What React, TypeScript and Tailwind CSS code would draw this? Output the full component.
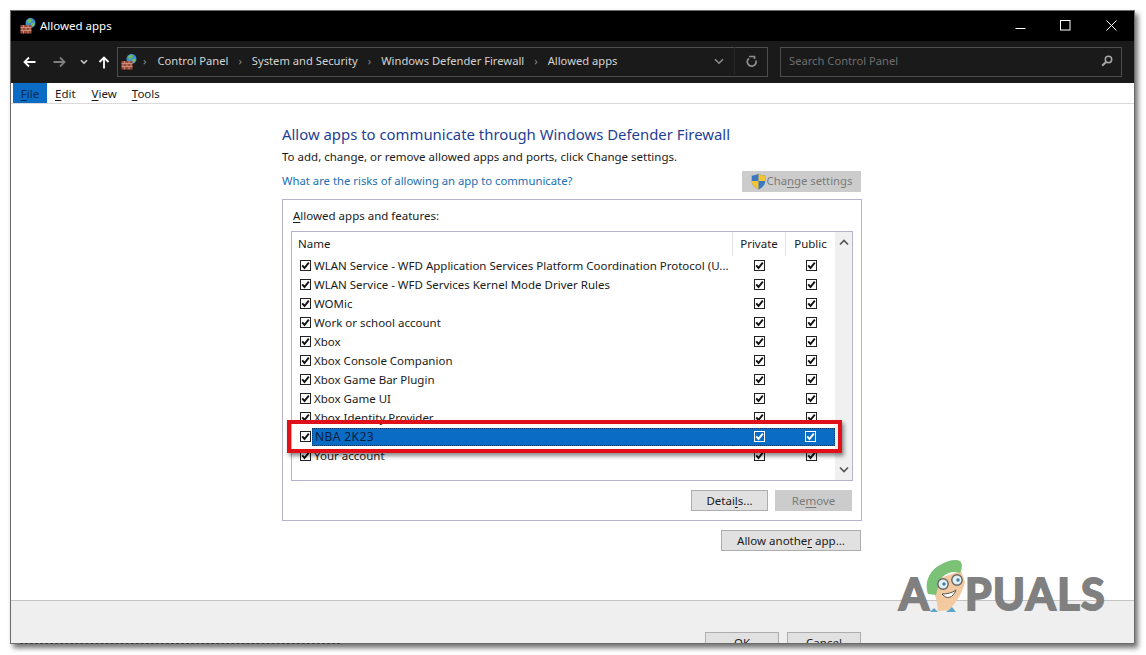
const font = { fontFamily: '"Noto Sans", "Open Sans", sans-serif' };

function FirewallIcon() {
  return (
    <svg width="16" height="17" viewBox="0 0 16 17" className="shrink-0">
      <circle cx="10.5" cy="6" r="5" fill="#3f8fd6" />
      <path d="M7 3.5 L10 1.5 L12 3 L10.5 5.5 L8 6Z" fill="#6fbf4a" />
      <path d="M11 6.5 L14.5 5.5 L14.5 8 L12 10Z" fill="#79c257" />
      <rect x="0.5" y="8" width="11" height="8.5" fill="#9c4a38" />
      <path d="M0.5 10.5H11.5M0.5 13.5H11.5M3.5 8V10.5M8 8V10.5M2 10.5V13.5M6 10.5V13.5M10 10.5V13.5M3.5 13.5V16.5M8 13.5V16.5" stroke="#d9a48e" strokeWidth="0.7" fill="none" />
    </svg>
  );
}

function Shield() {
  return (
    <svg width="15" height="17" viewBox="0 0 15 17" className="shrink-0">
      <path d="M7.5 0.5 C5.5 2 3 2.6 0.7 2.6 V8 C0.7 12 4 15 7.5 16.5 C11 15 14.3 12 14.3 8 V2.6 C12 2.6 9.5 2 7.5 0.5Z" fill="#3a78c2" />
      <path d="M7.5 0.5 C9.5 2 12 2.6 14.3 2.6 V8 H7.5Z" fill="#f3c434" />
      <path d="M7.5 8 H0.7 C0.7 12 4 15 7.5 16.5Z" fill="#f3c434" />
    </svg>
  );
}

function Check({ selected }: { selected?: boolean }) {
  return (
    <span
      className={
        selected
          ? "flex h-[11px] w-[11px] items-center justify-center border border-white bg-[#0a6cc4]"
          : "flex h-[11px] w-[11px] items-center justify-center border border-[#222222] bg-white"
      }
    >
      <svg width="9" height="9" viewBox="0 0 9 9">
        <path d="M1.2 4.4 L3.5 7 L7.8 1.6" fill="none" stroke={selected ? "#ffffff" : "#111111"} strokeWidth="1.9" />
      </svg>
    </span>
  );
}

function U({ children }: { children: string }) {
  return <span className="underline underline-offset-2">{children}</span>;
}

const rows = [
  "WLAN Service - WFD Application Services Platform Coordination Protocol (U...",
  "WLAN Service - WFD Services Kernel Mode Driver Rules",
  "WOMic",
  "Work or school account",
  "Xbox",
  "Xbox Console Companion",
  "Xbox Game Bar Plugin",
  "Xbox Game UI",
  "Xbox Identity Provider",
  "NBA 2K23",
  "Your account",
];

function Row({ name }: { name: string }) {
  const selected = name === "NBA 2K23";
  return (
    <div className="relative flex h-[19px] items-center text-[11.5px] text-[#1a1a1a]">
      <div className="flex w-[441px] items-center pl-[8px]">
        <Check />
        <span
          className={
            selected
              ? "ml-[1px] flex h-[18px] flex-1 items-center whitespace-nowrap border border-r-0 border-dotted border-[#0b3d70] bg-[#0a6cc4] pl-[2px] text-[12px] tracking-[0.4px] text-[#06203f]"
              : "ml-[3px] whitespace-nowrap"
          }
        >
          {name}
        </span>
      </div>
      <div className={selected ? "flex h-[18px] w-[102px] items-center border-y border-r border-dotted border-[#0b3d70] bg-[#0a6cc4]" : "flex w-[102px] items-center"}>
        <div className="flex w-[53px] justify-center">
          <Check selected={selected} />
        </div>
        <div className="flex w-[49px] justify-center pl-[2px]">
          <Check selected={selected} />
        </div>
      </div>
    </div>
  );
}

function Btn({ w, disabled, children }: { w: string; disabled?: boolean; children: React.ReactNode }) {
  return (
    <div
      className={
        w +
        " flex h-[21px] items-center justify-center border text-[11.5px] " +
        (disabled ? "border-[#cccccc] bg-[#cccccc] text-[#7a7a7a]" : "border-[#adadad] bg-[#e1e1e1] text-[#1a1a1a]")
      }
    >
      <span>{children}</span>
    </div>
  );
}

const logoText = "absolute text-[43px] font-bold leading-[56px] text-[#808080] [-webkit-text-stroke:2px_#808080] [stroke-linejoin:round]";

export default function App() {
  return (
    <div className="relative h-[655px] w-[1146px] overflow-hidden bg-white" style={font}>
      <div className="absolute left-[10px] top-[10px] flex h-[634px] w-[1125px] flex-col overflow-hidden border border-[#6b6b6b] bg-white shadow-[3px_4px_5px_rgba(0,0,0,0.55)]">
        {/* title bar */}
        <div className="flex h-[30px] shrink-0 items-center bg-black pb-[1px] pl-[9px] text-[11.5px] text-white">
          <FirewallIcon />
          <span className="ml-[4px]">Allowed apps</span>
          <div className="ml-auto flex items-center">
            <svg width="11" height="11" viewBox="0 0 11 11" className="mr-[34px]">
              <path d="M0.5 8.5H10.5" stroke="#fff" />
            </svg>
            <svg width="11" height="11" viewBox="0 0 11 11" className="mr-[35px]">
              <rect x="0.5" y="0.5" width="9.5" height="9.5" fill="none" stroke="#fff" />
            </svg>
            <svg width="11" height="11" viewBox="0 0 11 11" className="mr-[17px]">
              <path d="M0.5 0.5L10.5 10.5M10.5 0.5L0.5 10.5" stroke="#fff" />
            </svg>
          </div>
        </div>
        {/* address bar */}
        <div className="flex h-[42px] shrink-0 items-center bg-[#1a1a1a] pl-[12px] text-[11.2px] leading-[16px]">
          <svg width="13" height="12" viewBox="0 0 13 12">
            <path d="M12.5 6H2M6 1.5L1.5 6L6 10.5" fill="none" stroke="#fff" strokeWidth="1.8" />
          </svg>
          <svg width="13" height="12" viewBox="0 0 13 12" className="ml-[17px]">
            <path d="M0.5 6H11M7 1.5L11.5 6L7 10.5" fill="none" stroke="#7f7f7f" strokeWidth="1.8" />
          </svg>
          <svg width="8" height="6" viewBox="0 0 8 6" className="ml-[14px]">
            <path d="M1 1.2L4 4.2L7 1.2" fill="none" stroke="#cfcfcf" strokeWidth="1.6" />
          </svg>
          <svg width="12" height="13" viewBox="0 0 12 13" className="ml-[10px]">
            <path d="M6 12.5V2M1.5 6L6 1.5L10.5 6" fill="none" stroke="#fff" strokeWidth="1.8" />
          </svg>
          <div className="ml-[7px] flex h-[30px] w-[651px] items-center border border-[#4d4d4d] pb-[2px] pl-[3px] text-[#d4d4d4]">
            <FirewallIcon />
            <span className="ml-[6px] text-[#8a8a8a]">›</span>
            <span className="ml-[11px]">Control Panel</span>
            <span className="ml-[10px] text-[#8a8a8a]">›</span>
            <span className="ml-[10px]">System and Security</span>
            <span className="ml-[10px] text-[#8a8a8a]">›</span>
            <span className="ml-[10px]">Windows Defender Firewall</span>
            <span className="ml-[10px] text-[#8a8a8a]">›</span>
            <span className="ml-[10px]">Allowed apps</span>
            <div className="ml-auto flex items-center">
              <svg width="10" height="7" viewBox="0 0 10 7" className="mr-[10px]">
                <path d="M1 1.2L5 5.2L9 1.2" fill="none" stroke="#8c8c8c" strokeWidth="1.6" />
              </svg>
              <div className="mr-[11px] h-[28px] w-px bg-[#262626]" />
              <svg width="12" height="13" viewBox="0 0 12 13" className="mr-[9px]">
                <path d="M3 1.5H8.5V4M9.8 5.5A4.3 4.3 0 1 1 3 3.4" fill="none" stroke="#8c8c8c" strokeWidth="1.7" />
              </svg>
            </div>
          </div>
          <div className="ml-[12px] flex h-[30px] w-[342px] items-center justify-between border border-[#4d4d4d] pb-[2px] pl-[8px] pr-[8px] text-[#6e6e6e]">
            <span>Search Control Panel</span>
            <svg width="12" height="12" viewBox="0 0 12 12">
              <circle cx="7.5" cy="4.5" r="3.2" fill="none" stroke="#a8a8a8" strokeWidth="1.5" />
              <path d="M5 7L1.2 10.8" stroke="#a8a8a8" strokeWidth="2" />
            </svg>
          </div>
        </div>
        {/* menu bar */}
        <div className="flex h-[21px] shrink-0 border-b border-[#d9d9d9] bg-white pl-[2px] text-[11.5px] leading-[22px] text-[#1a1a1a]">
          <span className="h-[20px] w-[34px] bg-[#0a6cc4] text-center text-[#0b2c52]">
            <U>F</U>ile
          </span>
          <span className="ml-[8px]"><U>E</U>dit</span>
          <span className="ml-[16px]"><U>V</U>iew</span>
          <span className="ml-[15px]"><U>T</U>ools</span>
        </div>
        {/* content */}
        <div className="flex-1 bg-white pl-[271px] pt-[19px]">
          <div className="text-[14.9px] leading-[22px] text-[#1f3f94]">Allow apps to communicate through Windows Defender Firewall</div>
          <div className="mt-[4px] text-[11.5px] leading-[16px] text-[#1a1a1a]">To add, change, or remove allowed apps and ports, click Change settings.</div>
          <div className="mt-[6px] flex h-[21px] w-[579px] items-center justify-between text-[11.3px] leading-[16px]">
            <span className="pb-[1px] text-[#1a6fb5]">What are the risks of allowing an app to communicate?</span>
            <div className="flex h-[21px] w-[119px] items-center justify-center bg-[#cccccc] pb-[1px] text-[#7a7a7a]">
              <Shield />
              <span className="ml-[1px]">Cha<U>n</U>ge settings</span>
            </div>
          </div>
          <div className="mt-[7px] h-[322px] w-[580px] border border-[#b4b4cf] pl-[8px] pt-[7px]">
            <div className="pl-[2px] text-[11.5px] leading-[17px] text-[#1a1a1a]"><U>A</U>llowed apps and features:</div>
            <div className="mt-[7px] flex h-[250px] w-[562px] border border-[#b4b4cf]">
              <div className="w-[543px]">
                <div className="flex h-[24px] items-center text-[11.5px] text-[#1a1a1a]">
                  <span className="w-[440px] pl-[6px]">Name</span>
                  <span className="flex h-full w-[53px] items-center justify-center border-l border-[#e3e3e3]">Private</span>
                  <span className="flex h-full w-[50px] items-center justify-center border-l border-[#e3e3e3]">Public</span>
                </div>
                {rows.map((r) => (
                  <Row key={r} name={r} />
                ))}
              </div>
              <div className="flex w-[18px] flex-col items-center justify-between bg-[#f0f0f0] py-[7px]">
                <svg width="10" height="7" viewBox="0 0 10 7">
                  <path d="M1 5.5L5 1.5L9 5.5" fill="none" stroke="#555" strokeWidth="1.7" />
                </svg>
                <svg width="10" height="7" viewBox="0 0 10 7">
                  <path d="M1 1.5L5 5.5L9 1.5" fill="none" stroke="#555" strokeWidth="1.7" />
                </svg>
              </div>
            </div>
            <div className="mt-[9px] flex w-[561px] justify-end gap-[7px]">
              <Btn w="w-[77px]">Detai<U>l</U>s...</Btn>
              <Btn w="w-[77px]" disabled>Re<U>m</U>ove</Btn>
            </div>
          </div>
          <div className="mt-[9px] flex w-[579px] justify-end">
            <Btn w="w-[140px]">Allow anothe<U>r</U> app...</Btn>
          </div>
        </div>
        {/* footer */}
        <div className="flex h-[43px] shrink-0 justify-end gap-[8px] overflow-hidden border-t border-[#c4c4c4] bg-[#efefef] pr-[273px] pt-[31px]">
          <Btn w="w-[74px] shrink-0">OK</Btn>
          <Btn w="w-[74px] shrink-0">Cancel</Btn>
        </div>
      </div>

      {/* clipped content below the window's lower edge */}
      <div className="absolute left-[20px] top-[643px] w-[320px] border-t border-dashed border-[#3a3a3a]" />

      {/* red annotation */}
      <div className="absolute left-[287px] top-[420px] h-[33px] w-[555px] border-4 border-[#e0101a] shadow-[2px_3px_4px_rgba(0,0,0,0.45)]" />

      {/* watermark */}
      <div className="pointer-events-none absolute left-[898px] top-[558px] h-[56px] w-[212px]" style={{ fontFamily: '"Lato", sans-serif' }}>
        <span className={logoText + " left-[1px] top-[8px]"}>A</span>
        <svg width="50" height="56" viewBox="0 0 50 56" className="absolute left-[22px] top-0">
          <path d="M10 54 L14 50 L18 54Z M26 54 L32 49 L36 54Z" fill="#5fa6c9" />
          <path d="M14 22 L41 13 L45 24 C43 33 37 44 29 52 L18 53 C17 44 16 36 11 31Z" fill="#f3c9a0" />
          <path d="M8 36 C4 24 10 12 20 7 C28 2 36 1 40 3 C43 6 42 12 40 15 C32 12 24 16 20 22 L16 37Z" fill="#7cc276" />
          <circle cx="23" cy="26" r="5.2" fill="#dff0f7" stroke="#666" strokeWidth="1.4" />
          <circle cx="37" cy="22" r="5.2" fill="#dff0f7" stroke="#666" strokeWidth="1.4" />
          <circle cx="24" cy="26" r="1.7" fill="#4a7f9c" />
          <circle cx="38" cy="22" r="1.7" fill="#4a7f9c" />
          <path d="M22 36 C27 42 33 40 36 32 C32 35 27 36 22 36Z" fill="#fff" stroke="#555" strokeWidth="1" />
        </svg>
        <span className={logoText + " left-[67px] top-[8px] tracking-[1.5px]"}>PUALS</span>
      </div>
    </div>
  );
}
